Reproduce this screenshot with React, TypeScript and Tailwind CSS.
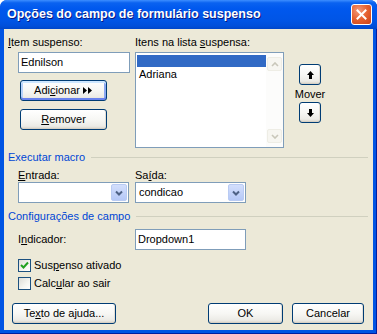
import React from "react";

const btnBase =
  "flex items-center justify-center rounded-[3px] border border-[#003C74] bg-[linear-gradient(to_bottom,#FFFFFF_0%,#F7F7F4_50%,#ECEBE6_85%,#D8D2C6_100%)] text-black";

function Btn({ children, className, def }: { children: React.ReactNode; className: string; def?: boolean }) {
  return (
    <div
      className={
        btnBase +
        " " +
        className +
        (def
          ? " shadow-[inset_0_2px_0_#CEE7FF,inset_0_-2px_0_#6982EE,inset_2px_0_0_#B8D2F9,inset_-2px_0_0_#8BA8F1]"
          : " shadow-[inset_0_-1px_0_#D6D0C5,inset_-1px_0_0_#E3DFD6]")
      }
    >
      {children}
    </div>
  );
}

function U({ children }: { children: React.ReactNode }) {
  return <span className="underline underline-offset-[1px]">{children}</span>;
}

function ComboArrow() {
  return (
    <div className="my-[1px] mr-[1px] flex w-[16px] items-center justify-center rounded-[2px] bg-[linear-gradient(to_bottom,#D3DFFC,#B5C8F7)] border border-[#B9CBF3]">
      <svg width="8" height="6" viewBox="0 0 8 6">
        <path d="M1 1.5 L4 4.5 L7 1.5" fill="none" stroke="#4D6185" strokeWidth="2" />
      </svg>
    </div>
  );
}

function Combo({ value, className }: { value?: string; className: string }) {
  return (
    <div className={"flex h-[21px] border border-[#7F9DB9] bg-white " + className}>
      <div className="flex flex-1 items-center pl-[3px]">{value}</div>
      <ComboArrow />
    </div>
  );
}

function GroupHeader({ children }: { children: React.ReactNode }) {
  return (
    <div className="ml-[4px] mr-[5px] flex items-center">
      <span className="text-[#0046D5]">{children}</span>
      <div className="ml-[6px] h-px flex-1 bg-[#D0D0BF]" />
    </div>
  );
}

function Checkbox({ checked }: { checked?: boolean }) {
  return (
    <div className="flex h-[13px] w-[13px] items-center justify-center border border-[#1C5180] bg-[linear-gradient(135deg,#DCDCD7_0%,#F5F5F1_60%,#FFFFFF_100%)]">
      {checked && (
        <svg width="9" height="9" viewBox="0 0 9 9">
          <path d="M1 4 L3.5 6.5 L8 1.5" fill="none" stroke="#21A121" strokeWidth="2" />
        </svg>
      )}
    </div>
  );
}

function ScrollArrow({ up }: { up?: boolean }) {
  return (
    <div className="flex h-[14px] w-[15px] items-center justify-center rounded-[2px] border border-[#EEEDE5] bg-[#F7F6F1]">
      <svg width="8" height="5" viewBox="0 0 8 5">
        <path d={up ? "M1 4 L4 1 L7 4" : "M1 1 L4 4 L7 1"} fill="none" stroke="#C9C7BA" strokeWidth="1.6" />
      </svg>
    </div>
  );
}

export default function App() {
  return (
    <div className="h-[334px] w-[377px] bg-white font-['Liberation_Sans',Arial,sans-serif] text-[11px] leading-[13px] text-black">
      <div className="flex h-[334px] w-[377px] flex-col rounded-t-[7px] bg-[#0054E3] shadow-[inset_-1px_-1px_0_#001EA0]">
        {/* Title bar */}
        <div className="flex h-[29px] items-center rounded-t-[7px] bg-[linear-gradient(to_bottom,#3D8EFF_0%,#0A62F0_10%,#0058EE_30%,#0055E6_70%,#004FDA_90%,#0046C8_100%)] pl-[7px] pr-[5px]">
          <span className="flex-1 font-['Liberation_Sans',Arial,sans-serif] text-[12.5px] font-bold text-white [text-shadow:1px_1px_#0A1883]">
            Opções do campo de formulário suspenso
          </span>
          <div className="flex h-[21px] w-[21px] items-center justify-center rounded-[3px] border border-white bg-[radial-gradient(circle_at_35%_30%,#F39A7C_0%,#E5602F_50%,#C8411A_100%)]">
            <svg width="11" height="11" viewBox="0 0 11 11">
              <path d="M1.5 1.5 L9.5 9.5 M9.5 1.5 L1.5 9.5" stroke="white" strokeWidth="2" strokeLinecap="square" />
            </svg>
          </div>
        </div>
        {/* Body */}
        <div className="mx-[4px] mb-[4px] flex flex-1 flex-col bg-[#ECE9D8] pt-[7px]">
          {/* Top section */}
          <div className="flex">
            <div className="ml-[4px] flex w-[127px] flex-col">
              <div>
                <U>I</U>tem suspenso:
              </div>
              <div className="ml-[10px] mt-[3px] flex h-[21px] w-[112px] items-center border border-[#7F9DB9] bg-white pl-[2px]">
                Ednilson
              </div>
              <Btn def className="ml-[12px] mt-[7px] h-[21px] w-[87px]">
                <span>
                  Adi<U>c</U>ionar
                </span>
                <svg className="ml-[3px]" width="10" height="7" viewBox="0 0 10 7">
                  <path d="M0 0 L4 3.5 L0 7 Z M5 0 L9 3.5 L5 7 Z" fill="black" />
                </svg>
              </Btn>
              <Btn className="ml-[12px] mt-[8px] h-[21px] w-[87px]">
                <span>
                  <U>R</U>emover
                </span>
              </Btn>
            </div>
            <div className="flex flex-col">
              <div>
                Itens na lista <U>s</U>uspensa:
              </div>
              <div className="mt-[3px] flex h-[96px] w-[149px] border border-[#7F9DB9] bg-white">
                <div className="flex flex-1 flex-col pl-[1px] pt-[2px]">
                  <div className="h-[12px] bg-[#316AC5]" />
                  <div className="mt-[1px] h-[13px] pl-[2px]">Adriana</div>
                </div>
                <div className="flex w-[17px] flex-col justify-between bg-[#FCFCFB] py-[4px] pl-[1px]">
                  <ScrollArrow up />
                  <ScrollArrow />
                </div>
              </div>
            </div>
            <div className="ml-[6px] flex w-[40px] flex-col items-center">
              <Btn className="mt-[28px] h-[21px] w-[22px]">
                <svg width="7" height="8" viewBox="0 0 7 8">
                  <path d="M3.5 0 L7 4 L5 4 L5 8 L2 8 L2 4 L0 4 Z" fill="black" />
                </svg>
              </Btn>
              <div className="mt-[3px] h-[13px]">Mover</div>
              <Btn className="mt-[1px] h-[21px] w-[22px]">
                <svg width="7" height="8" viewBox="0 0 7 8">
                  <path d="M3.5 8 L7 4 L5 4 L5 0 L2 0 L2 4 L0 4 Z" fill="black" />
                </svg>
              </Btn>
            </div>
          </div>

          <div className="mt-[3px]">
            <GroupHeader>Executar macro</GroupHeader>
          </div>
          <div className="mt-[5px] flex">
            <div className="ml-[14px] flex w-[117px] flex-col">
              <div>
                <U>E</U>ntrada:
              </div>
              <Combo className="w-[111px]" />
            </div>
            <div className="flex flex-col">
              <div>
                Sa<U>í</U>da:
              </div>
              <Combo className="w-[111px]" value="condicao" />
            </div>
          </div>

          <div className="mt-[7px]">
            <GroupHeader>Configurações de campo</GroupHeader>
          </div>
          <div className="mt-[6px] flex items-center">
            <div className="ml-[14px] w-[117px]">
              I<U>n</U>dicador:
            </div>
            <div className="flex h-[21px] w-[111px] items-center border border-[#7F9DB9] bg-white pl-[2px]">
              Dropdown1
            </div>
          </div>
          <div className="ml-[14px] mt-[9px] flex items-center">
            <Checkbox checked />
            <span className="ml-[3px]">
              Sus<U>p</U>enso ativado
            </span>
          </div>
          <div className="ml-[14px] mt-[5px] flex items-center">
            <Checkbox />
            <span className="ml-[3px]">
              Calc<U>u</U>lar ao sair
            </span>
          </div>

          <div className="mt-[13px] flex">
            <Btn className="ml-[8px] h-[21px] w-[104px]">
              <span>
                Te<U>x</U>to de ajuda...
              </span>
            </Btn>
            <Btn className="ml-auto h-[21px] w-[75px]">
              <span>OK</span>
            </Btn>
            <Btn className="ml-[9px] mr-[9px] h-[21px] w-[72px]">
              <span>Cancelar</span>
            </Btn>
          </div>
        </div>
      </div>
    </div>
  );
}
